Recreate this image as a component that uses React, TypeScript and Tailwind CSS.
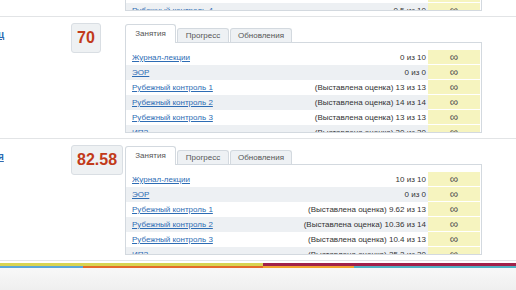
const font = { fontFamily: '"Liberation Sans", Arial, sans-serif' };

type Row = { name: string; value: string };

const rowsA: Row[] = [
  { name: "Журнал-лекции", value: "0 из 10" },
  { name: "ЭОР", value: "0 из 0" },
  { name: "Рубежный контроль 1", value: "(Выставлена оценка) 13 из 13" },
  { name: "Рубежный контроль 2", value: "(Выставлена оценка) 14 из 14" },
  { name: "Рубежный контроль 3", value: "(Выставлена оценка) 13 из 13" },
  { name: "ИПЗ", value: "(Выставлена оценка) 30 из 30" },
];

const rowsB: Row[] = [
  { name: "Журнал-лекции", value: "10 из 10" },
  { name: "ЭОР", value: "0 из 0" },
  { name: "Рубежный контроль 1", value: "(Выставлена оценка) 9.62 из 13" },
  { name: "Рубежный контроль 2", value: "(Выставлена оценка) 10.36 из 14" },
  { name: "Рубежный контроль 3", value: "(Выставлена оценка) 10.4 из 13" },
  { name: "ИПЗ", value: "(Выставлена оценка) 25.2 из 30" },
];

const rowsPrev: Row[] = [
  { name: "Рубежный контроль 3", value: "(Выставлена оценка) 13 из 13" },
  { name: "Рубежный контроль 4", value: "0.5 из 10" },
];

function GradeRow({ row, odd }: { row: Row; odd: boolean }) {
  return (
    <div className="flex h-[15px] text-[8px] leading-[15px]">
      <div className={`flex flex-1 justify-between pl-[6px] pr-[2px] ${odd ? "bg-[#edf0f3]" : "bg-white"}`}>
        <a href="#" className="text-[#2d6cb4] underline">{row.name}</a>
        <span className="text-[#333]">{row.value}</span>
      </div>
      <div className="mb-px flex w-[52px] items-center justify-center bg-[#f6f4bf] text-[12px] leading-none text-[#555]">
        ∞
      </div>
      <div className="w-px" />
    </div>
  );
}

function Section({ link, score, rows }: { link: string; score: string; rows: Row[] }) {
  return (
    <div className="flex border-b border-[#e2e4e6] pt-[7px] pb-[5px]">
      {/* name column is scrolled off to the left, only the tail shows */}
      <div className="w-[71px] overflow-hidden pt-[3px] text-[10px]">
        <a href="#" className="-ml-[2px] font-bold text-[#2d6cb4] underline">{link}</a>
      </div>
      <div className="w-[54px] pr-[10px]">
        <div className="-mt-px inline-block rounded-[3px] border border-[#d9dee3] bg-[#eef1f3] px-[5px] py-[3px] text-[16px] font-bold leading-[22px] text-[#c23a1a]">
          {score}
        </div>
      </div>
      <div className="w-[357px]">
        <div className="flex h-[18px] items-end gap-px text-[8px] text-[#555]">
          <div className="relative -mb-px flex h-[19px] w-[51px] items-center justify-center rounded-t-[3px] border border-b-0 border-[#d3d9df] bg-white">
            Занятия
          </div>
          <div className="flex h-[14px] w-[52px] items-center justify-center rounded-t-[3px] border border-b-0 border-[#d3d9df] bg-[#eef1f4]">
            Прогресс
          </div>
          <div className="flex h-[14px] w-[62px] items-center justify-center rounded-t-[3px] border border-b-0 border-[#d3d9df] bg-[#eef1f4]">
            Обновления
          </div>
        </div>
        <div className="h-[91px] overflow-hidden border border-[#d3d9df] bg-white pt-[7px]">
          {rows.map((r, i) => (
            <GradeRow key={r.name} row={r} odd={i % 2 === 1} />
          ))}
        </div>
      </div>
    </div>
  );
}

export default function App() {
  return (
    <div className="flex h-[290px] w-[516px] flex-col overflow-hidden bg-white" style={font}>
      {/* previous block, scrolled off the top */}
      <div className="flex h-[17px] border-b border-[#e2e4e6]">
        <div className="w-[125px]" />
        <div className="h-[11px] w-[357px] overflow-hidden border-x border-b border-[#d3d9df]">
          <div className="-mt-[12px]">
            {rowsPrev.map((r, i) => (
              <GradeRow key={r.name} row={r} odd={i % 2 === 1} />
            ))}
          </div>
        </div>
      </div>

      <Section link="ц" score="70" rows={rowsA} />
      <Section link="я" score="82.58" rows={rowsB} />

      <div className="mt-[2px] flex h-[3px]">
        <div className="w-[263px] bg-[#d8d452]" />
        <div className="flex-1 bg-[#a1224a]" />
      </div>
      <div className="flex h-[2px]">
        <div className="w-[83px] bg-[#5aa6d8]" />
        <div className="w-[180px] bg-[#e36a2b]" />
        <div className="w-[91px] bg-[#f1a431]" />
        <div className="flex-1 bg-[#4fb2c4]" />
      </div>
      <div className="flex-1 bg-gradient-to-b from-[#f8f8f8] to-[#efefef]" />
    </div>
  );
}
